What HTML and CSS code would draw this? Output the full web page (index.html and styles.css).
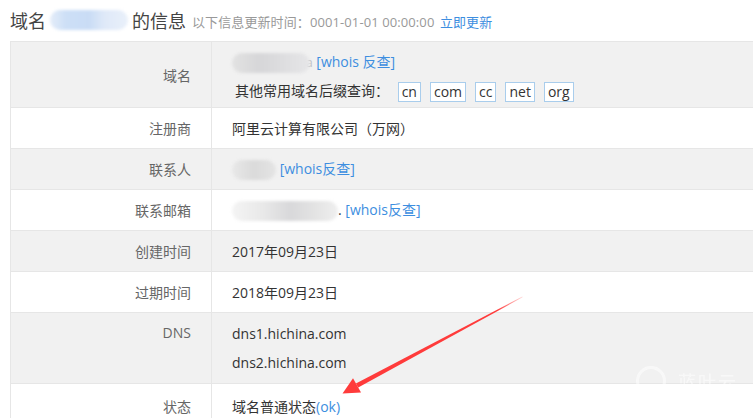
FILE: index.html
```html
<!DOCTYPE html>
<html lang="zh-CN">
<head>
  <meta charset="UTF-8">
  <title>域名信息</title>
  <link rel="stylesheet" href="styles.css">
</head>
<body>
  <div class="page">
    <h2 class="title">域名<span class="blur blur-blue"></span>的信息
      <small>以下信息更新时间：0001-01-01 00:00:00 <a href="#">立即更新</a></small>
    </h2>
    <table class="info">
      <tr class="gray row-domain">
        <th>域名</th>
        <td>
          <div class="line"><span class="blur blur-name"></span><span class="tail">a</span> <a href="#">[whois 反查]</a></div>
          <div class="line suffix">其他常用域名后缀查询：
            <a class="box" href="#">cn</a><a class="box" href="#">com</a><a class="box" href="#">cc</a><a class="box" href="#">net</a><a class="box" href="#">org</a>
          </div>
        </td>
      </tr>
      <tr>
        <th>注册商</th>
        <td>阿里云计算有限公司（万网）</td>
      </tr>
      <tr class="gray">
        <th>联系人</th>
        <td><span class="blur blur-person"></span> <a href="#">[whois反查]</a></td>
      </tr>
      <tr>
        <th>联系邮箱</th>
        <td><span class="blur blur-mail"></span>. <a href="#">[whois反查]</a></td>
      </tr>
      <tr class="gray">
        <th>创建时间</th>
        <td>2017年09月23日</td>
      </tr>
      <tr>
        <th>过期时间</th>
        <td>2018年09月23日</td>
      </tr>
      <tr class="gray row-dns">
        <th>DNS</th>
        <td>
          <div class="line">dns1.hichina.com</div>
          <div class="line">dns2.hichina.com</div>
        </td>
      </tr>
      <tr class="row-state">
        <th>状态</th>
        <td>域名普通状态<a href="#">(ok)</a></td>
      </tr>
    </table>
  </div>

  <div class="mark"><span class="mark-ring"></span><span class="mark-text">蓝叶云</span></div>

  <svg class="arrow" width="753" height="418" viewBox="0 0 753 418">
    <defs>
      <linearGradient id="fade" x1="522" y1="297" x2="357" y2="385" gradientUnits="userSpaceOnUse">
        <stop offset="0" stop-color="#ff3b3b" stop-opacity="0.2"/>
        <stop offset="0.15" stop-color="#ff3b3b" stop-opacity="1"/>
        <stop offset="1" stop-color="#ff3b3b"/>
      </linearGradient>
    </defs>
    <polygon points="522.3,296.6 522.6,297.3 358.2,387.4 355.9,383.4" fill="url(#fade)"/>
    <polygon points="342.5,393.5 353,378.2 361,392.6" fill="#ff3b3b"/>
  </svg>
</body>
</html>
```

FILE: styles.css
```css
* {
  margin: 0;
  padding: 0;
  box-sizing: border-box;
}
body {
  font-family: "Open Sans", "Noto Sans CJK SC", sans-serif;
  font-size: 14px;
  color: #333;
  background: #fff;
  overflow: hidden;
  width: 753px;
  height: 418px;
}
a {
  color: #3d8ee0;
  text-decoration: none;
}
.page {
  padding-left: 10px;
}
.title {
  height: 41px;
  display: flex;
  align-items: center;
  font-size: 18px;
  font-weight: normal;
  color: #444;
  white-space: nowrap;
  padding-bottom: 2px;
}
.title small {
  font-size: 13px;
  color: #999;
  margin-left: 6px;
  padding-top: 4px;
  letter-spacing: 0.1px;
}
.title small a {
  color: #3d8ee0;
  margin-left: 2px;
}
.blur {
  display: inline-block;
  height: 20px;
  border-radius: 10px;
  vertical-align: middle;
  filter: blur(1.5px);
}
.blur-blue {
  width: 78px;
  margin: 0 4px;
  background: linear-gradient(90deg, #e4edf9 0%, #cddff6 20%, #c9dcf5 50%, #dfe9f8 70%, #e9f0fa 100%);
}
.blur-name {
  width: 78px;
  background: linear-gradient(90deg, #e2e2e2 0%, #d6d6d8 35%, #dcdcde 60%, #e6e6e8 100%);
}
.blur-person {
  width: 44px;
  background: linear-gradient(90deg, #e8e8e8 0%, #dadada 50%, #e4e4e4 100%);
}
.blur-mail {
  width: 106px;
  background: linear-gradient(90deg, #f4f4f4 0%, #e8e8e8 30%, #d8d8da 55%, #e4e4e4 80%, #efefef 100%);
}
.tail {
  color: #bbb;
  font-size: 12px;
  margin-left: -4px;
}
.info {
  width: 760px;
  border-collapse: collapse;
  border-left: 1px solid #e6e6e6;
  border-top: 1px solid #e6e6e6;
}
.info th,
.info td {
  border-bottom: 1px solid #e6e6e6;
  height: 41px;
  vertical-align: middle;
}
.info th {
  width: 201px;
  font-weight: normal;
  color: #666;
  text-align: right;
  padding-right: 20px;
  border-right: 1px solid #e6e6e6;
}
.info td {
  padding-left: 20px;
  text-align: left;
}
.info .gray th,
.info .gray td {
  background: #f1f1f1;
}
.row-domain th,
.row-domain td {
  height: 66px;
}
.row-domain td {
  padding-top: 3px;
}
.row-domain .line {
  height: 27px;
  line-height: 27px;
}
.row-domain .suffix {
  padding-left: 3px;
  margin-top: 2px;
}
.box {
  display: inline-block;
  height: 20px;
  line-height: 18px;
  padding: 0 3px;
  margin-right: 9px;
  border: 1px solid #a9cdec;
  background: #fff;
  color: #333;
  vertical-align: middle;
}
.suffix .box:first-child {
  margin-left: 5px;
}
.row-dns th,
.row-dns td {
  height: 71px;
  vertical-align: top;
}
.row-dns th {
  padding-top: 10px;
}
.row-dns td {
  padding-top: 10px;
}
.row-dns .line {
  height: 29px;
  line-height: 22px;
}
.row-state th,
.row-state td {
  height: 41px;
  padding-top: 4px;
}
.mark {
  position: absolute;
  left: 636px;
  top: 366px;
  display: flex;
  align-items: center;
  opacity: 0.55;
}
.mark-ring {
  width: 30px;
  height: 30px;
  border: 3px solid #fff;
  border-radius: 50%;
}
.mark-text {
  color: #fff;
  font-size: 18px;
  margin-left: 12px;
  letter-spacing: 2px;
}
.arrow {
  position: absolute;
  left: 0;
  top: 0;
  pointer-events: none;
}
```
